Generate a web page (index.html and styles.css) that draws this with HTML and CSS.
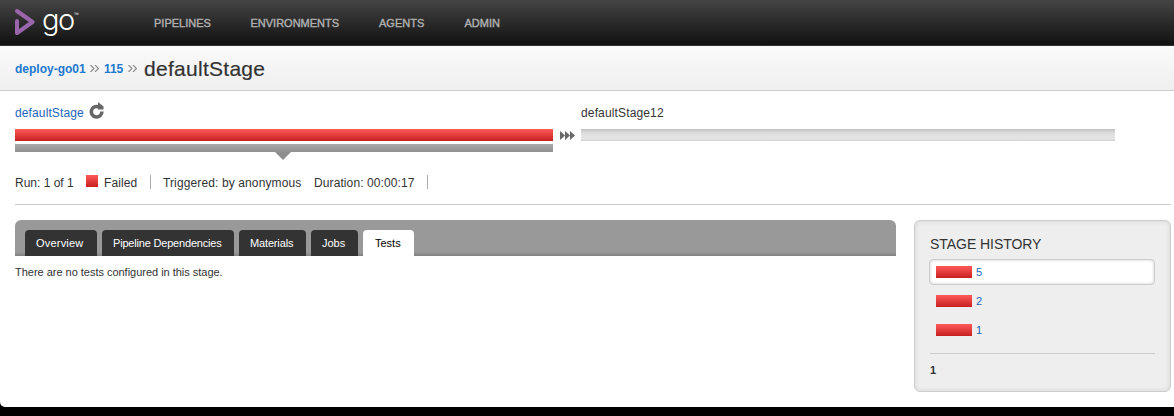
FILE: index.html
```html
<!DOCTYPE html>
<html lang="en">
<head>
<meta charset="utf-8">
<title>defaultStage</title>
<link rel="stylesheet" href="styles.css">
</head>
<body>
<div class="page">
  <header class="topbar">
    <a class="logo">
      <svg class="logo-mark" width="21" height="28" viewBox="0 0 21 28"><path d="M3 3 18.500 14 3 25V13" fill="none" stroke="#9b65ac" stroke-width="4" stroke-linecap="round" stroke-linejoin="round"/></svg>
      <span class="logo-text">go</span><span class="logo-tm">™</span>
    </a>
    <nav class="nav"><a class="n1">PIPELINES</a><a class="n2">ENVIRONMENTS</a><a class="n3">AGENTS</a><a class="n4">ADMIN</a></nav>
  </header>
  <div class="crumbs">
    <a class="crumb c1">deploy-go01</a>
    <svg class="sep s1" width="9" height="7" viewBox="0 0 9 7"><path d="M.5 0 4 3.500.5 7M5 0 8.500 3.500 5 7"/></svg>
    <a class="crumb c2">115</a>
    <svg class="sep s2" width="9" height="7" viewBox="0 0 9 7"><path d="M.5 0 4 3.500.5 7M5 0 8.500 3.500 5 7"/></svg>
    <h1 class="title">defaultStage</h1>
  </div>
  <div class="stages">
    <section class="stage current">
      <div class="stage-name"><a class="link t-stage">defaultStage</a>
        <svg class="rerun" width="16" height="17" viewBox="0 0 16 17"><path d="M12.900 9.500A5.300 5.300 0 1 1 9.500 4.800H12" fill="none" stroke="#666" stroke-width="3.500"/><path d="M9 0 14.500 4.500V7.500H9Z" fill="#666"/></svg>
      </div>
      <div class="bar failed"></div>
      <div class="selected"></div>
      <svg class="pointer" width="16" height="8" viewBox="0 0 16 8"><path d="M0 0H16L8 8Z" fill="#8e8e8e"/></svg>
    </section>
    <svg class="arrows" width="15" height="9" viewBox="0 0 15 9"><path d="M0 0 5 4.500 0 9ZM5 0 10 4.500 5 9ZM10 0 15 4.500 10 9Z" fill="#686868"/></svg>
    <section class="stage next">
      <div class="stage-name"><span class="t-stage12">defaultStage12</span></div>
      <div class="bar unknown"></div>
    </section>
  </div>
  <div class="status">
    <span class="run">Run: 1 of 1</span><span class="swatch failed"></span><span class="result">Failed</span><i class="rule"></i><span class="trigger">Triggered: by anonymous</span><span class="duration">Duration: 00:00:17</span><i class="rule"></i>
  </div>
  <div class="columns">
    <main class="content">
      <div class="tabs"><a class="tab w1">Overview</a><a class="tab w2">Pipeline Dependencies</a><a class="tab w3">Materials</a><a class="tab w4">Jobs</a><a class="tab w5 active">Tests</a></div>
      <p class="empty"><span>There are no tests configured in this stage.</span></p>
    </main>
    <aside class="history">
      <h2 class="history-title">STAGE HISTORY</h2>
      <div class="entry chosen"><span class="chip failed"></span><a class="link">5</a></div>
      <div class="entry"><span class="chip failed"></span><a class="link">2</a></div>
      <div class="entry"><span class="chip failed"></span><a class="link">1</a></div>
      <div class="pager">1</div>
    </aside>
  </div>
</div>
</body>
</html>
```
FILE: styles.css
```css
* { box-sizing: border-box; }
body { margin: 0; height: 416px; overflow: hidden; background: #000; color: #333; font: 12px/14px "Liberation Sans", Arial, sans-serif; }
.page { height: 407px; background: #fff; border-bottom-left-radius: 5px; }
.topbar { display: flex; height: 46px; background: linear-gradient(#444, #121212 44px); border-bottom: 1px solid #303030; }
.logo { display: flex; width: 154px; padding-left: 14px; color: #fff; }
.logo-mark { margin-top: 8px; }
.logo-text { margin: 2px 0 0 7px; font: 300 29px/36px Inter, Roboto, sans-serif; letter-spacing: -1.500px; }
.logo-tm { margin: 11px 0 0 0; font-size: 5px; line-height: 6px; }
.nav { display: flex; font-size: 11px; line-height: 46px; color: #b0b0b0; -webkit-text-stroke: .4px #b0b0b0; white-space: nowrap; }
.n1 { width: 96.500px; }
.n2 { width: 128.500px; }
.n3 { width: 85.500px; }
.crumbs { display: flex; align-items: flex-start; height: 45px; padding-left: 15px; background: linear-gradient(#fafafa, #efefef); border-bottom: 1px solid #ccc; white-space: nowrap; }
.crumb { margin-top: 16px; font-weight: bold; color: #2078cf; }
.c1 { width: 75px; }
.c2 { width: 23px; margin-left: 5px; letter-spacing: -.1px; }
.sep { margin-top: 19px; fill: none; stroke: #888; stroke-width: 1.100; }
.s2 { margin-left: 1px; }
.title { margin: 9px 0 0 7px; font-size: 21px; line-height: 28px; font-weight: normal; letter-spacing: .28px; -webkit-text-stroke: .2px #333; }
.stages { display: flex; height: 77px; padding: 14px 0 0 15px; }
.stage-name { display: flex; height: 24px; padding-top: 1px; }
.t-stage { width: 69px; letter-spacing: .12px; }
.t-stage12 { letter-spacing: .14px; }
.current { width: 538px; }
.next { width: 534px; margin-left: 6px; }
.link { color: #1c64b8; }
.rerun { margin: -4px 0 0 5px; }
.bar { height: 12px; }
.failed { background: linear-gradient(#ff5a5a, #c82020); }
.unknown { background: linear-gradient(#c2c2c2, #dedede 35%, #e5e5e5 80%, #d2d2d2); }
.selected { height: 8px; margin-top: 3px; background: linear-gradient(#aaa, #909090); }
.pointer { display: block; margin-left: 260px; }
.arrows { margin: 26px 0 0 7px; }
.status { display: flex; height: 37px; margin: 0 3px 0 15px; padding-top: 7px; border-bottom: 1px solid #ccc; line-height: 16px; white-space: nowrap; }
.run { width: 71px; }
.swatch { width: 12px; height: 12px; }
.result { width: 46px; margin-left: 6px; letter-spacing: .12px; }
.rule { width: 1px; height: 14px; background: #aaa; }
.trigger { width: 151px; margin-left: 12px; letter-spacing: .12px; }
.duration { width: 113px; letter-spacing: .1px; }
.columns { display: flex; margin: 15px 3px 0 15px; gap: 18px; }
.content { width: 881px; }
.tabs { display: flex; gap: 5px; height: 36px; padding: 10px 10px 0; border-radius: 6px 6px 0 0; background: linear-gradient(#999 32px, #808080); font-size: 11px; }
.tab { height: 26px; padding-left: 11px; line-height: 26px; border-radius: 4px 4px 0 0; background: #333; color: #fff; white-space: nowrap; }
.w1 { width: 72px; letter-spacing: .2px; }
.w2 { width: 132px; letter-spacing: -.19px; }
.w3 { width: 67px; letter-spacing: -.15px; }
.w4 { width: 47px; }
.w5 { width: 51px; padding-left: 12px; }
.active { background: #fff; color: #000; }
.empty { margin: 9px 0 0; font-size: 11px; letter-spacing: -.02px; }
.history { width: 257px; height: 172px; padding: 15px 15px 0; border: 1px solid #ccc; border-radius: 6px; background: #eee; box-shadow: inset 0 0 5px #d5d5d5; font-size: 11px; }
.history-title { margin: 0 0 7px; font-size: 14px; line-height: 16px; font-weight: normal; letter-spacing: -.05px; }
.entry { display: flex; align-items: center; height: 26px; margin: 0 0 3px -1px; padding-left: 7px; gap: 4px; }
.chosen { padding-left: 6px; border: 1px solid #ccc; border-radius: 4px; background: #fff; box-shadow: inset 0 0 3px #ccc; }
.chip { width: 36px; height: 12px; }
.pager { margin-top: 10px; padding-top: 9px; border-top: 1px solid #ccc; font-weight: bold; }
```
